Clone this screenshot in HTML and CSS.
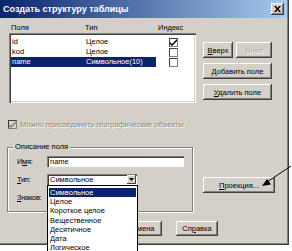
FILE: index.html
```html
<!DOCTYPE html>
<html lang="ru">
<head>
  <meta charset="UTF-8">
  <title>Создать структуру таблицы</title>
  <link rel="stylesheet" href="styles.css">
</head>
<body>

  <div class="window">
    <div class="titlebar">
      <span class="title">Создать структуру таблицы</span>
      <span class="close">
        <svg width="7" height="6" viewBox="0 0 7 6"><path d="M0 0h2l1.5 2 1.5-2h2l-2.5 3 2.5 3h-2l-1.5-2-1.5 2h-2l2.5-3z" fill="#000"/></svg>
      </span>
    </div>

    <div class="top">
      <div class="fields">
        <div class="heads">
          <span>Поля</span>
          <span>Тип</span>
          <span>Индекс</span>
        </div>
        <div class="list">
          <div class="row">
            <span class="cell">id</span>
            <span class="cell">Целое</span>
            <span class="cb"><svg width="7" height="7" viewBox="0 0 7 7"><path d="M0 3l2 2 5-5v2l-5 5-2-2z" fill="#000"/></svg></span>
          </div>
          <div class="row">
            <span class="cell">kod</span>
            <span class="cell">Целое</span>
            <span class="cb"></span>
          </div>
          <div class="row sel">
            <span class="cell">name</span>
            <span class="cell">Символьное(10)</span>
            <span class="cb"></span>
          </div>
        </div>
      </div>

      <div class="side">
        <div class="pair">
          <button class="btn up"><u>В</u>верх</button>
          <button class="btn down" disabled>Вниз</button>
        </div>
        <button class="btn wide"><u>Д</u>обавить поле</button>
        <button class="btn wide"><u>У</u>далить поле</button>
      </div>
    </div>

    <div class="geo">
      <span class="cb off"><svg width="7" height="7" viewBox="0 0 7 7"><path d="M0 3l2 2 5-5v2l-5 5-2-2z" fill="#808080"/></svg></span>
      <span class="geo-text">Можно присоединять географические объекты</span>
    </div>

    <div class="middle">
      <div class="group">
        <span class="gtitle">Описание поля</span>
        <div class="frow">
          <span class="lbl">И<u>м</u>я:</span>
          <span class="input">name</span>
        </div>
        <div class="frow">
          <span class="lbl"><u>Т</u>ип:</span>
          <span class="combo">
            <span class="combo-text">Символьное</span>
            <span class="combo-btn"><svg width="5" height="3" viewBox="0 0 5 3"><path d="M0 0h5l-2.5 3z" fill="#000"/></svg></span>
          </span>
        </div>
        <div class="frow">
          <span class="lbl"><u>З</u>наков:</span>
        </div>
      </div>
      <div class="side2">
        <button class="btn proj"><u>П</u>роекция...</button>
      </div>
    </div>

    <div class="footer">
      <button class="btn foot">Отмена</button>
      <button class="btn foot help">Сп<u>р</u>авка</button>
    </div>

    <ul class="popup">
      <li class="on">Символьное</li>
      <li>Целое</li>
      <li>Короткое целое</li>
      <li>Вещественное</li>
      <li>Десятичное</li>
      <li>Дата</li>
      <li>Логическое</li>
    </ul>

    <svg class="pointer" width="34" height="28" viewBox="0 0 34 28">
      <line x1="33" y1="3" x2="9" y2="19" stroke="#000" stroke-width="1"/>
      <path d="M4 23l9-1.5-4-5.5z" fill="#000"/>
    </svg>
  </div>

</body>
</html>
```

FILE: styles.css
```css
html {
  overflow: hidden;
  background: #fff;
}

body {
  margin: 0;
  height: 251px;
  font-family: "Liberation Sans", Arial, sans-serif;
  font-size: 7.5px;
  color: #000;
}

.window {
  position: relative;
  width: 289px;
  height: 245px;
  box-sizing: border-box;
  background: #d4d0c8;
  border-right: 1px solid #404040;
  border-bottom: 1px solid #404040;
  box-shadow: inset -1px -1px 0 #808080;
}

.titlebar {
  height: 18px;
  width: 287px;
  box-sizing: border-box;
  padding: 0 3px 0 3px;
  display: flex;
  align-items: center;
  justify-content: space-between;
  background: linear-gradient(to right, #0a246a, #a6caf0);
}

.title {
  color: #fff;
  font-weight: bold;
  font-size: 9px;
}

.close {
  width: 13px;
  height: 12px;
  display: flex;
  align-items: center;
  justify-content: center;
  background: #d4d0c8;
  box-shadow: inset -1px -1px #404040, inset 1px 1px #fff, inset -2px -2px #808080;
}

/* верхняя часть: список полей и кнопки */
.top {
  display: flex;
  margin-top: 3px;
}

.fields {
  margin-left: 9px;
  width: 187px;
}

.heads {
  height: 12px;
  display: grid;
  grid-template-columns: 74px 73px auto;
  padding-left: 2px;
  align-items: center;
}

.list {
  height: 70px;
  box-sizing: border-box;
  padding: 4px 2px 0 2px;
  background: #fff;
  box-shadow: inset 1px 1px #808080, inset 2px 2px #404040, inset -1px -1px #fff, inset -2px -2px #d4d0c8;
}

.row {
  height: 10px;
  display: grid;
  grid-template-columns: 74px 71px auto;
  align-items: center;
}

.row .cell {
  height: 10px;
  line-height: 10px;
  padding-left: 1px;
  white-space: nowrap;
}

.row.sel .cell {
  background: #0a246a;
  color: #fff;
}

.cb {
  width: 9px;
  height: 9px;
  box-sizing: border-box;
  display: flex;
  align-items: center;
  justify-content: center;
  background: #fff;
  border: 1px solid #404040;
  border-right-color: #808080;
  border-bottom-color: #808080;
}

.row .cb {
  margin-left: 13px;
}

.side {
  margin-left: 7px;
  padding-top: 21px;
  width: 69px;
  display: flex;
  flex-direction: column;
  gap: 5px;
}

.pair {
  display: flex;
  gap: 3px;
}

.btn {
  height: 16px;
  padding: 0;
  border: none;
  font-family: inherit;
  font-size: 7.5px;
  color: #000;
  background: #d4d0c8;
  box-shadow: inset -1px -1px #404040, inset 1px 1px #fff, inset -2px -2px #808080;
}

.btn.up {
  width: 30px;
}

.btn.down {
  width: 36px;
  color: #a9a59d;
  text-shadow: 1px 1px #fff;
}

.btn.wide {
  width: 69px;
}

/* флажок гео-объектов */
.geo {
  display: flex;
  align-items: center;
  gap: 3px;
  margin: 17px 0 0 8px;
  height: 9px;
}

.cb.off {
  background: #d4d0c8;
}

.geo-text {
  color: #8c8880;
  text-shadow: 1px 1px #fff;
}

/* описание поля */
.middle {
  display: flex;
  margin-top: 18px;
}

.group {
  margin-left: 7px;
  width: 186px;
  height: 65px;
  box-sizing: border-box;
  border: 1px solid #808080;
  box-shadow: 1px 1px 0 #fff, inset 1px 1px 0 #fff;
}

.gtitle {
  display: table;
  margin: -6px 0 0 5px;
  padding: 0 2px;
  line-height: 10px;
  background: #d4d0c8;
}

.frow {
  display: flex;
  align-items: center;
  height: 11px;
  margin-top: 7px;
  padding-left: 9px;
}

.frow:nth-child(2) {
  margin-top: 4px;
}

.lbl {
  width: 30px;
  letter-spacing: -0.3px;
}

.input {
  width: 137px;
  height: 11px;
  box-sizing: border-box;
  padding: 0 3px;
  line-height: 11px;
  background: #fff;
  box-shadow: inset 1px 1px #808080, inset 2px 2px #404040, inset -1px -1px #fff;
}

.combo {
  width: 90px;
  height: 11px;
  box-sizing: border-box;
  padding: 0 1px 0 3px;
  display: flex;
  align-items: center;
  justify-content: space-between;
  background: #fff;
  box-shadow: inset 1px 1px #808080, inset 2px 2px #404040, inset -1px -1px #fff;
}

.combo-btn {
  width: 9px;
  height: 9px;
  display: flex;
  align-items: center;
  justify-content: center;
  background: #d4d0c8;
  box-shadow: inset -1px -1px #404040, inset 1px 1px #fff;
}

.side2 {
  margin-left: 10px;
  padding-top: 30px;
}

.btn.proj {
  width: 72px;
}

/* нижние кнопки */
.footer {
  display: flex;
  gap: 14px;
  margin-top: 9px;
  padding-left: 120px;
}

.btn.foot {
  width: 42px;
  height: 15px;
}

/* выпадающий список типов */
.popup {
  position: absolute;
  left: 47px;
  top: 185px;
  width: 91px;
  height: 75px;
  box-sizing: border-box;
  margin: 0;
  padding: 2px 1px 0 1px;
  list-style: none;
  background: #fff;
  border: 1px solid #000;
}

.popup li {
  height: 9.2px;
  line-height: 9.2px;
  padding-left: 1px;
}

.popup li.on {
  background: #0a246a;
  color: #fff;
}

.pointer {
  position: absolute;
  left: 258px;
  top: 163px;
}
```
